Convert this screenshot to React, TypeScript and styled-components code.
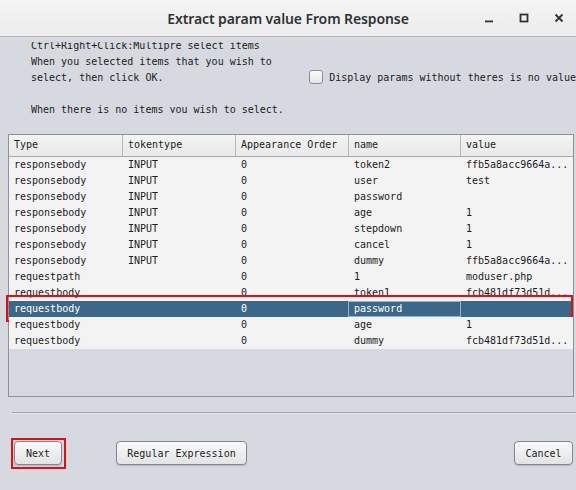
import React from "react";
import styled, { createGlobalStyle } from "styled-components";

const Global = createGlobalStyle`
  html, body { margin: 0; padding: 0; background: #d6d9df; }
  * { box-sizing: border-box; }
`;

const mono = `"DejaVu Sans Mono", "Liberation Mono", monospace`;

const Window = styled.div`
  width: 576px;
  height: 490px;
  overflow: hidden;
  background: #d6d9df;
  display: flex;
  flex-direction: column;
  font-family: ${mono};
  font-size: 10px;
  color: #1c1c1c;
`;

const TitleBar = styled.div`
  height: 37px;
  flex: none;
  background: linear-gradient(#f4f4f4, #ececec);
  border-bottom: 1px solid #b6b6b6;
  display: flex;
  align-items: center;
  justify-content: center;
  position: relative;
`;

const Title = styled.div`
  font-family: "Noto Sans", "DejaVu Sans", sans-serif;
  font-size: 14px;
  font-weight: 600;
  color: #2e3436;
  letter-spacing: -0.1px;
`;

const Controls = styled.div`
  position: absolute;
  right: 10px;
  top: 0;
  height: 36px;
  display: flex;
  align-items: center;
  gap: 21px;
  color: #2e3436;
`;

const Ctl = styled.span`
  width: 14px;
  height: 14px;
  display: flex;
  align-items: center;
  justify-content: center;
`;

const Intro = styled.div`
  height: 97px;
  flex: none;
  display: flex;
  padding-left: 31px;
`;

const MessageClip = styled.div`
  width: 279px;
  margin-top: 5px;
  height: 71px;
  overflow: hidden;
`;

const Message = styled.div`
  margin-top: -4px;
  line-height: 16px;
  white-space: pre;
`;

const CheckRow = styled.label`
  margin-top: 33px;
  height: 14px;
  display: flex;
  align-items: center;
  gap: 6px;
  white-space: nowrap;
`;

const CheckBox = styled.span`
  width: 14px;
  height: 14px;
  flex: none;
  border: 1px solid #8a8d92;
  border-radius: 3px;
  background: linear-gradient(#fbfbfb, #e6e6e6);
`;

const TablePanel = styled.div`
  height: 263px;
  margin: 0 2px 0 8px;
  flex: none;
  border: 1px solid #8e9196;
  background: #d6d9df;
  display: flex;
  flex-direction: column;
`;

const Row = styled.div<{ $head?: boolean; $sel?: boolean }>`
  display: grid;
  grid-template-columns: 114px 113px 113px 112px 1fr;
  height: ${(p) => (p.$head ? "22px" : "16px")};
  line-height: ${(p) => (p.$head ? "20px" : "16px")};
  background: ${(p) => (p.$head ? "linear-gradient(#f4f4f4, #e9e9e9)" : p.$sel ? "#3b6788" : "#f3f3f3")};
  color: ${(p) => (p.$sel ? "#ffffff" : "#1c1c1c")};
  border-bottom: ${(p) => (p.$head ? "1px solid #a6a8ab" : "none")};
  position: relative;
`;

const Cell = styled.div<{ $head?: boolean }>`
  padding-left: 5px;
  white-space: nowrap;
  overflow: hidden;
  border-right: ${(p) => (p.$head ? "1px solid #b4b6b9" : "none")};
  &:last-child { border-right: none; }
`;

const EditCell = styled.div`
  margin-left: -1px;
  padding-left: 5px;
  border: 1px solid #8db3d6;
  line-height: 14px;
  white-space: nowrap;
`;

const Highlight = styled.div`
  position: absolute;
  left: -3px;
  right: 0px;
  top: -6px;
  bottom: -5px;
  border: 2px solid #e01010;
  pointer-events: none;
`;

const Separator = styled.div`
  margin: 15px 0 0 12px;
  height: 2px;
  border-top: 1px solid #a2a5aa;
  border-bottom: 1px solid #e4e6ea;
  flex: none;
`;

const Buttons = styled.div`
  display: flex;
  align-items: center;
  padding: 0 3px 0 14px;
  margin-top: 27px;
  height: 24px;
`;

const Button = styled.button<{ $w: number; $ml?: number; $auto?: boolean }>`
  position: relative;
  width: ${(p) => p.$w}px;
  height: 24px;
  margin-left: ${(p) => (p.$auto ? "auto" : `${p.$ml ?? 0}px`)};
  border: 1px solid #84878c;
  border-radius: 4px;
  background: linear-gradient(#fafafa, #e2e3e5);
  box-shadow: 0 1px 1px rgba(0, 0, 0, 0.15);
  font-family: ${mono};
  font-size: 10px;
  color: #222;
  padding: 0;
`;

const ButtonMark = styled.div`
  position: absolute;
  left: -4px;
  top: -4px;
  right: -5px;
  bottom: -5px;
  border: 2px solid #e01010;
`;

type R = [string, string, string, string, string];
const rows: R[] = [
  ["responsebody", "INPUT", "0", "token2", "ffb5a8acc9664a..."],
  ["responsebody", "INPUT", "0", "user", "test"],
  ["responsebody", "INPUT", "0", "password", ""],
  ["responsebody", "INPUT", "0", "age", "1"],
  ["responsebody", "INPUT", "0", "stepdown", "1"],
  ["responsebody", "INPUT", "0", "cancel", "1"],
  ["responsebody", "INPUT", "0", "dummy", "ffb5a8acc9664a..."],
  ["requestpath", "", "0", "1", "moduser.php"],
  ["requestbody", "", "0", "token1", "fcb481df73d51d..."],
  ["requestbody", "", "0", "password", ""],
  ["requestbody", "", "0", "age", "1"],
  ["requestbody", "", "0", "dummy", "fcb481df73d51d..."],
];

export default function App() {
  return (
    <Window>
      <Global />
      <TitleBar>
        <Title>Extract param value From Response</Title>
        <Controls>
          <Ctl>
            <svg width="10" height="10" viewBox="0 0 10 10"><rect x="1" y="7.5" width="8" height="1.8" fill="#2e3436" /></svg>
          </Ctl>
          <Ctl>
            <svg width="10" height="10" viewBox="0 0 10 10"><rect x="1.5" y="1.5" width="7" height="7" fill="none" stroke="#2e3436" strokeWidth="1.8" /></svg>
          </Ctl>
          <Ctl>
            <svg width="10" height="10" viewBox="0 0 10 10"><path d="M1.5 1.5 L8.5 8.5 M8.5 1.5 L1.5 8.5" stroke="#2e3436" strokeWidth="1.8" /></svg>
          </Ctl>
        </Controls>
      </TitleBar>
      <Intro>
        <MessageClip>
          <Message>{`Ctrl+Right+Click:Multipre select items
When you selected items that you wish to
select, then click OK.

When there is no items you wish to select.`}</Message>
        </MessageClip>
        <CheckRow>
          <CheckBox />
          Display params without theres is no value
        </CheckRow>
      </Intro>
      <TablePanel>
        <Row $head>
          {["Type", "tokentype", "Appearance Order", "name", "value"].map((h) => (
            <Cell $head key={h}>{h}</Cell>
          ))}
        </Row>
        {rows.map((r, i) => {
          const sel = i === 9;
          return (
            <Row key={i} $sel={sel}>
              <Cell>{r[0]}</Cell>
              <Cell>{r[1]}</Cell>
              <Cell>{r[2]}</Cell>
              {sel ? <EditCell>{r[3]}</EditCell> : <Cell>{r[3]}</Cell>}
              <Cell>{r[4]}</Cell>
              {sel && <Highlight />}
            </Row>
          );
        })}
      </TablePanel>
      <Separator />
      <Buttons>
        <Button $w={48}>
          Next
          <ButtonMark />
        </Button>
        <Button $w={131} $ml={54}>Regular Expression</Button>
        <Button $w={59} $auto>Cancel</Button>
      </Buttons>
    </Window>
  );
}
